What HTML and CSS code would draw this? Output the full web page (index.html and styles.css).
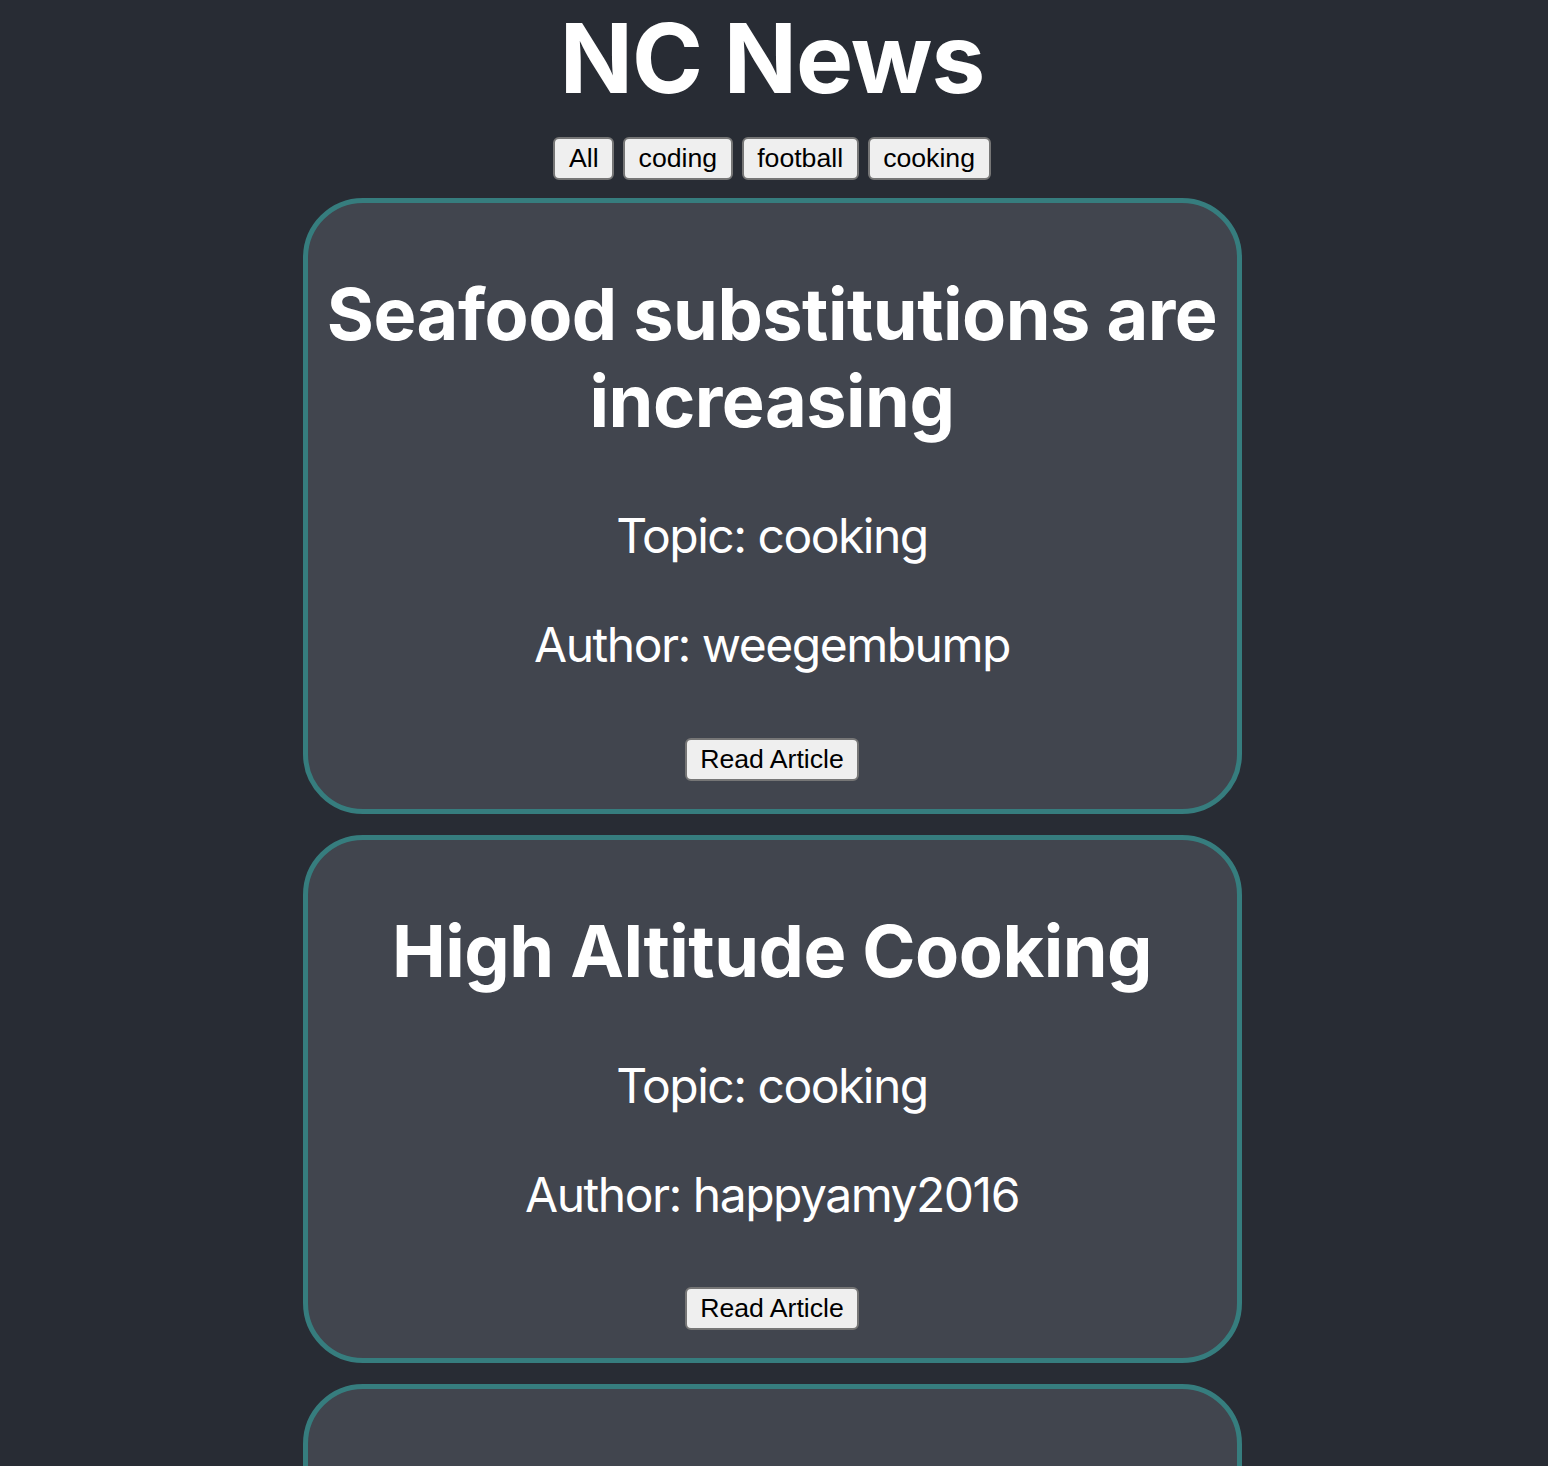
FILE: index.html
```html
<!DOCTYPE html>
<html lang="en">
<head>
<meta charset="utf-8">
<title>NC News</title>
<link rel="stylesheet" href="styles.css">
</head>
<body>
<div class="app">
  <header class="header">
    <h1 class="site-title">NC News</h1>
    <nav class="topics">
      <button class="btn">All</button>
      <button class="btn">coding</button>
      <button class="btn">football</button>
      <button class="btn">cooking</button>
    </nav>
  </header>
  <main class="articles">
    <article class="card">
      <h2 class="card-title">Seafood substitutions are increasing</h2>
      <p class="card-meta">Topic: cooking</p>
      <p class="card-meta">Author: weegembump</p>
      <div class="card-action"><button class="btn">Read Article</button></div>
    </article>
    <article class="card">
      <h2 class="card-title">High Altitude Cooking</h2>
      <p class="card-meta">Topic: cooking</p>
      <p class="card-meta">Author: happyamy2016</p>
      <div class="card-action"><button class="btn">Read Article</button></div>
    </article>
    <article class="card">
      <h2 class="card-title">Twice-Baked Butternut Squash Is the Thanksgiving Side Dish of Your Dreams</h2>
      <p class="card-meta">Topic: cooking</p>
      <p class="card-meta">Author: jessjelly</p>
      <div class="card-action"><button class="btn">Read Article</button></div>
    </article>
  </main>
</div>
</body>
</html>
```
FILE: styles.css
```css
html, body {
  margin: 0;
  padding: 0;
  background: #282c34;
}

body {
  font-family: Inter, "Noto Sans", sans-serif;
  color: #ffffff;
}

.app {
  width: 1544px;
  display: flex;
  flex-direction: column;
  align-items: center;
}

.header {
  display: flex;
  flex-direction: column;
  align-items: center;
}

.site-title {
  margin: 0;
  font-size: 96px;
  font-weight: 700;
  letter-spacing: -1px;
  line-height: 1.21;
}

.topics {
  display: flex;
  gap: 9px;
  margin-top: 21px;
}

.btn {
  font-family: "Liberation Sans", Arial, sans-serif;
  font-size: 26.67px;
  color: #000;
  background: #efefef;
  border: 2px solid #767676;
  border-radius: 6px;
  padding: 4px 13.5px;
  line-height: normal;
}

.articles {
  margin-top: 18px;
  display: flex;
  flex-direction: column;
  gap: 21px;
}

.card {
  width: 939px;
  box-sizing: border-box;
  background: #41454e;
  border: 5px solid #367d7e;
  border-radius: 60px;
  padding: 4px 0 28px;
  text-align: center;
}

.card-title {
  margin: 63px 0;
  font-size: 72px;
  font-weight: 700;
  line-height: 1.21;
  letter-spacing: -0.5px;
}

.card-meta {
  margin: 51px 0;
  font-size: 48px;
  font-weight: 400;
  line-height: 1.21;
  letter-spacing: -1.5px;
}

.card-action {
  margin-top: 63px;
}
```
